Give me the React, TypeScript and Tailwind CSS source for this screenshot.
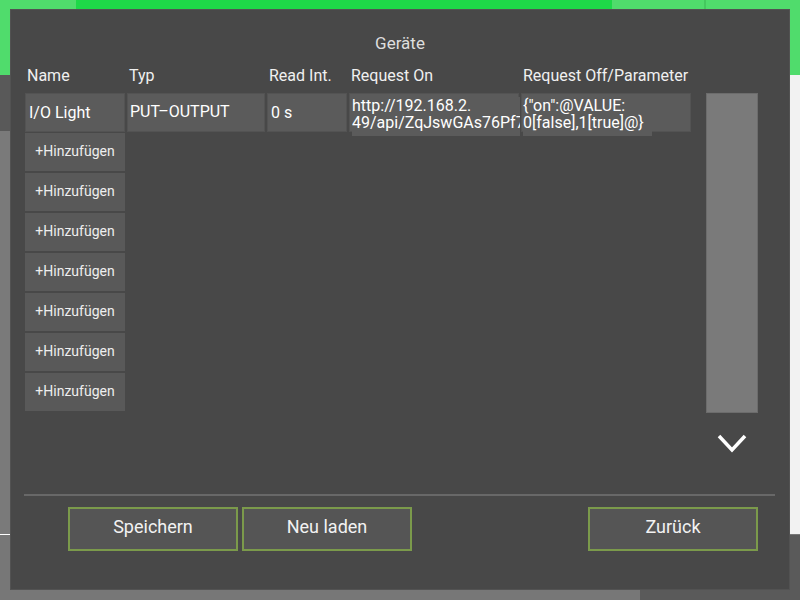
import React from "react";

const columns = [
  { label: "Name", w: "w-[100px]" },
  { label: "Typ", w: "w-[138px]" },
  { label: "Read Int.", w: "w-[80px]" },
  { label: "Request On", w: "w-[170px]" },
  { label: "Request Off/Parameter", w: "w-[170px]" },
];

function Backdrop() {
  return (
    <div className="flex flex-col w-full h-full">
      {/* window bar behind the dialog */}
      <div className="flex h-[75px]">
        <div className="w-[76px] bg-[#50dc6c]" />
        <div className="w-[536px] bg-[#1ed848]" />
        <div className="w-[92px] bg-[#50dc6c]" />
        <div className="w-[2px] bg-[#44c85e]" />
        <div className="flex-1 bg-[#50dc6c]" />
      </div>
      <div className="flex h-[459px]">
        <div className="w-[10px] flex flex-col">
          <div className="h-[56px] bg-[#595959]" />
          <div className="flex-1 bg-[#7a7a7a]" />
        </div>
        <div className="flex-1 bg-[#5a5a5a]" />
        <div className="w-[10px] bg-[#f2f2f2]" />
      </div>
      <div className="flex h-[1px]">
        <div className="w-[10px] bg-white" />
        <div className="flex-1 bg-[#777777]" />
      </div>
      <div className="flex flex-1">
        <div className="w-[640px] bg-[#777777]" />
        <div className="flex-1 bg-[#5a5a5a]" />
      </div>
    </div>
  );
}

function Cell({ w, children, className = "" }: { w: string; children?: React.ReactNode; className?: string }) {
  return (
    <div className={`${w} h-[39px] bg-[#5b5b5b] border border-[#535353] text-[16px] leading-[18px] text-white ${className}`}>
      {children}
    </div>
  );
}

function ActionButton({ label }: { label: string }) {
  return (
    <button className="w-[170px] h-[44px] pb-[4px] bg-[#555555] border-2 border-[#7b9a4b] text-[18px] leading-[20px] text-[#f2f2f2] flex items-center justify-center">
      {label}
    </button>
  );
}

export default function App() {
  return (
    <div className="relative w-[800px] h-[600px] overflow-hidden font-['Roboto',sans-serif]">
      <Backdrop />

      {/* dialog */}
      <div className="absolute left-[10px] top-[9px] w-[780px] h-[581px] bg-[#484848] border border-[#525252] flex flex-col">
        <div className="pt-[23px] h-[43px] text-center text-[17px] leading-[20px] text-[#dedede]">Geräte</div>

        <div className="flex gap-[2px] pl-[14px] mt-[14px] h-[18px] text-[16px] leading-[18px] text-[#f0f0f0]">
          {columns.map((c) => (
            <div key={c.label} className={`${c.w} pl-[2px] whitespace-nowrap`}>
              {c.label}
            </div>
          ))}
        </div>

        <div className="flex h-[401px] mt-[8px] pl-[14px]">
          <div className="flex flex-col">
            <div className="flex gap-[2px]">
              <Cell w="w-[100px]" className="flex items-center pl-[3px]">I/O Light</Cell>
              <Cell w="w-[138px]" className="flex items-center pl-[2px] pb-[2px]">PUT–OUTPUT</Cell>
              <Cell w="w-[80px]" className="flex items-center pl-[3px]">0 s</Cell>
              <Cell w="w-[170px]" className="relative">
                <div className="absolute left-[2px] top-0 w-[168px] h-[42px] overflow-hidden whitespace-nowrap leading-[17px] pt-[3px]">
                  <div className="bg-[#5b5b5b]">http://192.168.2.</div>
                  <div className="bg-[#5b5b5b] h-[22px]">49/api/ZqJswGAs76Pf7dEY1oHa</div>
                </div>
              </Cell>
              <Cell w="w-[170px]" className="relative">
                <div className="absolute left-[1px] top-0 w-[166px] h-[42px] overflow-hidden whitespace-nowrap leading-[17px] pt-[3px]">
                  <div>{'{"on":@VALUE:'}</div>
                  <span className="inline-block bg-[#5b5b5b] h-[22px] pr-[8px]">0[false],1[true]@{"}"}</span>
                </div>
              </Cell>
            </div>
            <div className="flex flex-col gap-[2px] mt-[1px]">
              {Array.from({ length: 7 }).map((_, i) => (
                <button
                  key={i}
                  className="w-[100px] h-[38px] pb-[2px] bg-[#595959] text-[14px] text-[#eeeeee] flex items-center justify-center"
                >
                  +Hinzufügen
                </button>
              ))}
            </div>
          </div>

          <div className="ml-[15px] flex flex-col items-center">
            <div className="w-[52px] h-[320px] bg-[#7a7a7a] border border-[#6c6c6c]" />
            <svg className="mt-[20px]" width="32" height="20" viewBox="0 0 32 20" fill="none">
              <polyline points="3,3 16,17 29,3" stroke="white" strokeWidth="3.5" />
            </svg>
          </div>
        </div>

        <div className="ml-[13px] mr-[14px] h-[2px] bg-[#686868]" />

        <div className="flex mt-[11px] ml-[57px] gap-[4px]">
          <ActionButton label="Speichern" />
          <ActionButton label="Neu laden" />
          <div className="ml-[172px]">
            <ActionButton label="Zurück" />
          </div>
        </div>
      </div>
    </div>
  );
}
